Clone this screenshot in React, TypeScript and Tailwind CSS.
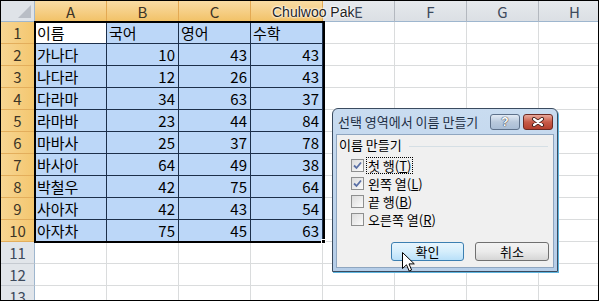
import React from 'react';

const cols = ['A', 'B', 'C', 'D', 'E', 'F', 'G', 'H'];

const rows: (string | number)[][] = [
  ['이름', '국어', '영어', '수학'],
  ['가나다', 10, 43, 43],
  ['나다라', 12, 26, 43],
  ['다라마', 34, 63, 37],
  ['라마바', 23, 44, 84],
  ['마바사', 25, 37, 78],
  ['바사아', 64, 49, 38],
  ['박철우', 42, 75, 64],
  ['사아자', 42, 43, 54],
  ['아자차', 75, 45, 63],
  [],
  [],
  [],
];

const kr = "font-['Noto_Sans_CJK_KR','Noto_Sans',sans-serif]";

function Check({ checked, label, mnemonic, focused }: { checked: boolean; label: string; mnemonic: string; focused?: boolean }) {
  return (
    <div className="flex items-center h-[18px]">
      <div className="w-[13px] h-[13px] border border-[#8e8f8f] bg-gradient-to-br from-[#dcdcdc] to-[#fbfbfb] flex items-center justify-center">
        {checked && (
          <svg width="11" height="11" viewBox="0 0 11 11">
            <path d="M2 5.5 L4.5 8 L9 2.5" stroke="#5a70a6" strokeWidth="1.8" fill="none" />
          </svg>
        )}
      </div>
      <span className={`ml-[3px] px-[1px] leading-[15px] text-[13px] text-black ${focused ? 'outline outline-1 outline-dotted outline-black' : ''}`}>
        {label}(<span className="underline">{mnemonic}</span>)
      </span>
    </div>
  );
}

export default function App() {
  return (
    <div className={`w-[599px] h-[301px] overflow-hidden bg-white border border-black ${kr}`}>
      <div className="relative w-full h-full">
        {/* column headers */}
        <div className="flex h-[21px]">
          <div className="w-[34px] shrink-0 border-r border-b border-[#9eb6ce] bg-[#dfe3e8] relative">
            <div className="absolute right-[3px] bottom-[3px] w-0 h-0 border-l-[13px] border-l-transparent border-b-[13px] border-b-[#b9bec6]" />
          </div>
          {cols.map((c, i) => {
            const sel = i < 4;
            return (
              <div
                key={c}
                className={`w-[72px] shrink-0 flex items-center justify-center text-[15px] leading-none border-r border-b ${
                  sel
                    ? 'bg-gradient-to-b from-[#f9dca4] to-[#f2c267] border-r-[#e3a953] border-b-[#e39a3c] text-[#3c3426]'
                    : 'bg-gradient-to-b from-[#e6e9ed] to-[#dbdfe4] border-r-[#b3b8bf] border-b-[#9eb6ce] text-[#3d4a5c]'
                }`}
              >
                {c === 'D' ? '' : c}
              </div>
            );
          })}
        </div>

        {/* rows */}
        {rows.map((r, ri) => {
          const inSel = ri < 10;
          return (
            <div key={ri} className="flex h-[22px]">
              <div
                className={`w-[34px] shrink-0 flex items-center justify-center text-[15px] leading-none border-r border-b ${
                  inSel
                    ? 'bg-gradient-to-r from-[#f7d592] to-[#f4c76f] border-b-[#e3ae5c] border-r-[#e39a3c] text-[#3c3426]'
                    : 'bg-[#e1e5ea] border-b-[#c5cad1] border-r-[#9eb6ce] text-[#3d4a5c]'
                }`}
              >
                {ri + 1}
              </div>
              {cols.map((c, ci) => {
                const cellSel = inSel && ci < 4;
                const v = r[ci];
                const isNum = typeof v === 'number';
                const bg = cellSel ? (ri === 0 && ci === 0 ? 'bg-white' : 'bg-[#bcd7f8]') : 'bg-white';
                const line = cellSel ? 'border-[#1c2f4a]' : 'border-[#dadcdd]';
                return (
                  <div
                    key={c}
                    className={`w-[72px] shrink-0 flex items-center border-r border-b ${bg} ${line} text-[15px] leading-none text-black ${
                      isNum ? 'justify-end pr-[3px]' : 'justify-start pl-[2px]'
                    }`}
                  >
                    {v ?? ''}
                  </div>
                );
              })}
            </div>
          );
        })}

        {/* selection outline */}
        <div className="absolute left-[33px] top-[20px] w-[291px] h-[222px] border-2 border-black pointer-events-none" />
        <div className="absolute left-[320px] top-[238px] w-[5px] h-[5px] bg-black border border-white" />

        {/* watermark */}
        <div className="absolute left-[271px] top-[3px] text-[14px] leading-[16px] text-[#1f1f1f] font-['Liberation_Sans',sans-serif] [text-shadow:0_0_2px_#fff,0_0_2px_#fff,0_0_3px_#fff]">
          Chulwoo Pak
        </div>

        {/* dialog */}
        <div className="absolute left-[331px] top-[107px] w-[226px] h-[164px] flex flex-col border border-[#3a4b5f] rounded-t-[6px] bg-gradient-to-b from-[#c9dcf0] to-[#b5cde8] shadow-[1px_1px_0_#5fb6e0]">
          <div className="h-[25px] flex items-center pl-[5px] pr-[4px]">
            <span className="text-[13px] text-[#1e2f45] flex-1 whitespace-nowrap">선택 영역에서 이름 만들기</span>
            <div className="w-[30px] h-[16px] rounded-[3px] border border-[#5e718a] bg-gradient-to-b from-[#e3ebf5] via-[#b9c9dc] to-[#a9bdd5] flex items-center justify-center text-[12px] font-bold text-white [text-shadow:0_0_1px_#223,0_0_1px_#223] font-['Liberation_Sans',sans-serif]">
              ?
            </div>
            <div className="w-[30px] h-[16px] ml-[3px] rounded-[3px] border border-[#6b2a24] bg-gradient-to-b from-[#e9a99c] via-[#c75a48] to-[#b5402e] flex items-center justify-center">
              <svg width="14" height="10" viewBox="0 0 14 10">
                <path d="M3 2 L11 8 M11 2 L3 8" stroke="#3b1a16" strokeWidth="4" strokeLinecap="round" />
                <path d="M3 2 L11 8 M11 2 L3 8" stroke="#fff" strokeWidth="2.2" strokeLinecap="round" />
              </svg>
            </div>
          </div>
          <div className="flex-1 mx-[3px] mb-[3px] bg-[#f0f0f0] border border-[#8fa6c0] pt-[2px] flex flex-col">
            <div className="flex items-center h-[16px] pl-[2px]">
              <span className="text-[13px] text-black">이름 만들기</span>
              <div className="flex-1 h-px bg-[#d5dfe5] ml-[7px] mr-[5px] mt-[2px]" />
            </div>
            <div className="ml-[14px] mt-[3px] flex flex-col">
              <Check checked label="첫 행" mnemonic="T" focused />
              <Check checked label="왼쪽 열" mnemonic="L" />
              <Check checked={false} label="끝 행" mnemonic="B" />
              <Check checked={false} label="오른쪽 열" mnemonic="R" />
            </div>
            <div className="flex justify-end gap-[11px] pr-[4px] mt-[14px]">
              <div className="w-[73px] h-[19px] rounded-[3px] border border-[#3c7fb1] bg-gradient-to-b from-[#e8f5fd] via-[#d5eefc] to-[#b9e0f9] flex items-center justify-center text-[13px] text-black">
                확인
              </div>
              <div className="w-[74px] h-[19px] rounded-[3px] border border-[#707070] bg-gradient-to-b from-[#f3f3f3] via-[#ebebeb] to-[#d6d6d6] flex items-center justify-center text-[13px] text-black">
                취소
              </div>
            </div>
          </div>
        </div>

        {/* mouse cursor */}
        <svg className="absolute left-[401px] top-[251px]" width="13" height="21" viewBox="0 0 13 21">
          <path d="M0.5 0.5 L0.5 16.5 L4.5 12.8 L7.2 19 L9.6 18 L7 11.9 L12.3 11.9 Z" fill="#fff" stroke="#000" strokeWidth="1" strokeLinejoin="miter" />
        </svg>
      </div>
    </div>
  );
}
